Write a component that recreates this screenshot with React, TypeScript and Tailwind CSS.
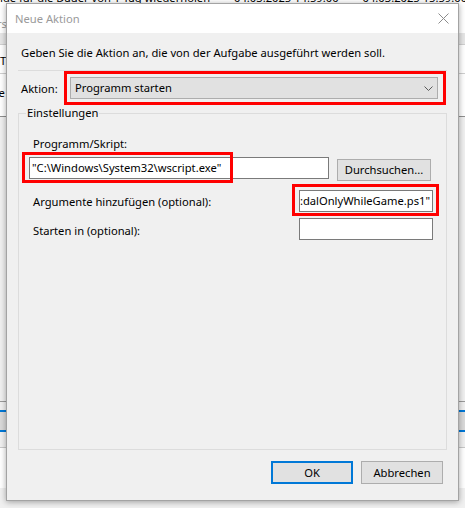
import React from "react";

// Fenster im Hintergrund (nur die Ränder sind sichtbar)
function Background() {
  return (
    <div className="flex flex-col w-full h-full">
      <div className="h-[3px] overflow-hidden bg-white">
        <div className="flex gap-[24px] -mt-[10px] -ml-[4px] whitespace-nowrap text-[#000]">
          <span>nde für die Dauer von 1 Tag wiederholen</span>
          <span>04.03.2025 14:59:00</span>
          <span>04.03.2025 15:59:00</span>
          <span>x(</span>
        </div>
      </div>
      <div className="h-[30px] bg-white flex items-end pb-[1px] -ml-[3px] text-[#9a9a9a]">rs</div>
      <div className="h-[12px] bg-[#e6e6e6] border-b border-[#cfcfcf]" />
      <div className="h-[29px] bg-white flex items-center pt-[3px] border-b border-[#cfcfcf]">T</div>
      <div className="h-[43px] bg-white flex items-center pb-[4px] -ml-[6px] border-b border-[#8f8f8f]">re</div>
      <div className="h-[285px] bg-[#f0f0f0] border-b border-[#9a9a9a]" />
      <div className="h-[8px] bg-[#f0f0f0]" />
      <div className="h-[22px] bg-[#dadada] border-y-2 border-[#0078d7]" />
      <div className="h-[16px] bg-[#f0f0f0] border-b border-[#c8c8c8]" />
      <div className="h-[40px] bg-white" />
      <div className="flex-1 bg-[#f0f0f0]" />
    </div>
  );
}

function CloseIcon() {
  return (
    <svg width="11" height="11" viewBox="0 0 11 11" className="block">
      <path d="M0.5 0.5 L10.5 10.5 M10.5 0.5 L0.5 10.5" stroke="#8c8c8c" strokeWidth="1" fill="none" />
    </svg>
  );
}

function Chevron() {
  return (
    <svg width="9" height="5" viewBox="0 0 9 5" className="block">
      <path d="M0.5 0.5 L4.5 4.5 L8.5 0.5" stroke="#5a5a5a" strokeWidth="1" fill="none" />
    </svg>
  );
}

function Button({ label, primary }: { label: string; primary?: boolean }) {
  return (
    <div
      className={
        primary
          ? "w-[82px] h-[23px] flex items-center justify-center bg-[#e1e1e1] border-2 border-[#0078d7]"
          : "w-[82px] h-[23px] flex items-center justify-center bg-[#e1e1e1] border border-[#adadad]"
      }
    >
      {label}
    </div>
  );
}

function Dialog() {
  return (
    <div className="absolute left-[6px] top-[3px] w-[453px] h-[498px] flex flex-col bg-[#f0f0f0] border border-[#a3a3a3] shadow-[0_1px_6px_rgba(0,0,0,0.35)]">
      {/* Titelleiste */}
      <div className="h-[29px] shrink-0 bg-white flex items-center justify-between pl-[8px] pr-[9px]">
        <span className="text-[#9a9a9a] pt-[1px]">Neue Aktion</span>
        <CloseIcon />
      </div>

      <div className="flex-1 flex flex-col">
        <p className="pl-[14px] pt-[12px] leading-[16px]">
          Geben Sie die Aktion an, die von der Aufgabe ausgeführt werden soll.
        </p>

        <div className="mt-[9px] mx-[11px] border-t border-[#dcdcdc]">
          <div className="flex items-center pl-[3px]">
            <span className="pt-[1px]">Aktion:</span>
            <div className="ml-auto mr-[1px] w-[382px] h-[34px] border-[3px] border-[#ff0000] pl-[3px] pr-[5px] py-[3px]">
              <div className="h-[22px] bg-[#e1e1e1] border border-[#adadad] flex items-center justify-between pl-[4px] pr-[4px]">
                <span>Programm starten</span>
                <Chevron />
              </div>
            </div>
          </div>

          {/* Einstellungen */}
          <div className="mt-[8px] h-[337px] border border-[#dcdcdc] flex flex-col">
            <span className="-mt-[9px] ml-[7px] px-[1px] w-fit bg-[#f0f0f0] leading-[16px]">Einstellungen</span>

            <span className="mt-[15px] pl-[14px] leading-[16px]">Programm/Skript:</span>
            <div className="mt-[5px] pl-[10px] flex items-start gap-[8px]">
              <div className="relative w-[300px] h-[22px] bg-white border border-[#7a7a7a] flex items-center pl-[2px] whitespace-nowrap">
                "C:\Windows\System32\wscript.exe"
                <div className="absolute -left-[8px] -top-[6px] w-[211px] h-[31px] border-[3px] border-[#ff0000]" />
              </div>
              <div className="mt-[2px] w-[94px] h-[22px] bg-[#e1e1e1] border border-[#adadad] flex items-center justify-center">
                Durchsuchen...
              </div>
            </div>

            <div className="mt-[9px] pl-[14px] pr-[13px] flex items-start">
              <span className="mt-[4px] leading-[16px]">Argumente hinzufügen (optional):</span>
              <div className="relative ml-auto w-[134px] h-[22px] bg-white border border-[#7a7a7a] flex items-center justify-end pr-[2px] whitespace-nowrap">
                <span>:dalOnlyWhileGame.ps1"</span>
                <div className="absolute -left-[8px] -top-[7px] w-[147px] h-[32px] border-[3px] border-[#ff0000]" />
              </div>
            </div>

            <div className="mt-[6px] pl-[14px] pr-[13px] flex items-start">
              <span className="mt-[5px] leading-[16px]">Starten in (optional):</span>
              <div className="ml-auto w-[134px] h-[22px] bg-white border border-[#7a7a7a]" />
            </div>
          </div>
        </div>

        <div className="mt-[11px] pr-[15px] flex justify-end gap-[8px]">
          <Button label="OK" primary />
          <Button label="Abbrechen" />
        </div>
      </div>
    </div>
  );
}

export default function App() {
  return (
    <div className="relative w-[465px] h-[508px] overflow-hidden bg-[#f0f0f0] font-['Noto_Sans',sans-serif] text-[11.2px] leading-[16px] text-black">
      <Background />
      <Dialog />
    </div>
  );
}
